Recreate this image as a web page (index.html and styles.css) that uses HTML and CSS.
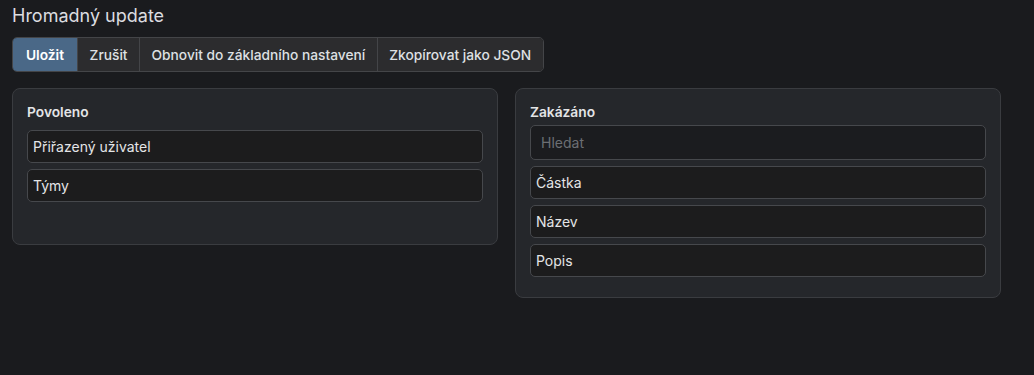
FILE: index.html
```html
<!DOCTYPE html>
<html lang="cs">
<head>
  <meta charset="UTF-8" />
  <title>Hromadný update</title>
  <link rel="stylesheet" href="styles.css">
</head>
<body>
  <h1 class="title">Hromadný update</h1>

  <div class="btn-group">
    <button class="btn primary">Uložit</button>
    <button class="btn">Zrušit</button>
    <button class="btn">Obnovit do základního nastavení</button>
    <button class="btn">Zkopírovat jako JSON</button>
  </div>

  <div class="columns">
    <div class="panel">
      <div class="panel-label">Povoleno</div>
      <div class="list enabled">
        <div class="item">Přiřazený uživatel</div>
        <div class="item">Týmy</div>
      </div>
    </div>

    <div class="panel">
      <div class="panel-label">Zakázáno</div>
      <input class="search" type="text" placeholder="Hledat">
      <div class="list">
        <div class="item">Částka</div>
        <div class="item">Název</div>
        <div class="item">Popis</div>
      </div>
    </div>
  </div>
</body>
</html>
```

FILE: styles.css
```css
body {
  margin: 0;
  padding: 5px 12px;
  background: #1a1b1e;
  color: #dee0e3;
  font-family: Inter, "Noto Sans", sans-serif;
  font-size: 14px;
}

.title {
  margin: 0 0 10px;
  font-size: 18px;
  font-weight: 400;
  line-height: 22px;
  color: #dcdde0;
}

.btn-group {
  display: inline-flex;
  border: 1px solid #444548;
  border-radius: 5px;
  overflow: hidden;
}

.btn {
  padding: 0 11.5px;
  height: 33px;
  background: #2c2c2e;
  color: #dee0e3;
  border: none;
  border-left: 1px solid #444548;
  font-family: inherit;
  font-size: 13.75px;
  font-weight: 500;
}

.btn:first-child {
  border-left: none;
}

.btn.primary {
  background: #4a6887;
  color: #fff;
  font-weight: 600;
  padding: 0 13px;
}

.columns {
  display: flex;
  align-items: flex-start;
  gap: 17px;
  width: 989px;
  margin-top: 16px;
}

.panel {
  flex: 1;
  background: #25272b;
  border: 1px solid #3a3c40;
  border-radius: 8px;
  padding: 12px 14px 20px;
}

.panel-label {
  font-weight: 600;
  font-size: 13.75px;
  line-height: 22px;
  color: #e3e4e6;
}

.list {
  display: flex;
  flex-direction: column;
  gap: 6px;
  margin-top: 6px;
}

.list.enabled {
  margin-top: 7px;
  padding-bottom: 22px;
}

.item {
  height: 31px;
  line-height: 31px;
  padding: 0 5px;
  background: #1c1c1d;
  border: 1px solid #46484c;
  border-radius: 5px;
  font-size: 14px;
  color: #e4e5e7;
}

.search {
  display: block;
  box-sizing: border-box;
  width: 100%;
  height: 35px;
  margin-top: 2px;
  padding: 0 10px;
  background: #1b1c1f;
  border: 1px solid #46484c;
  border-radius: 5px;
  color: #e4e5e7;
  font-family: inherit;
  font-size: 14px;
}

.search::placeholder {
  color: #6c6f74;
}
```
